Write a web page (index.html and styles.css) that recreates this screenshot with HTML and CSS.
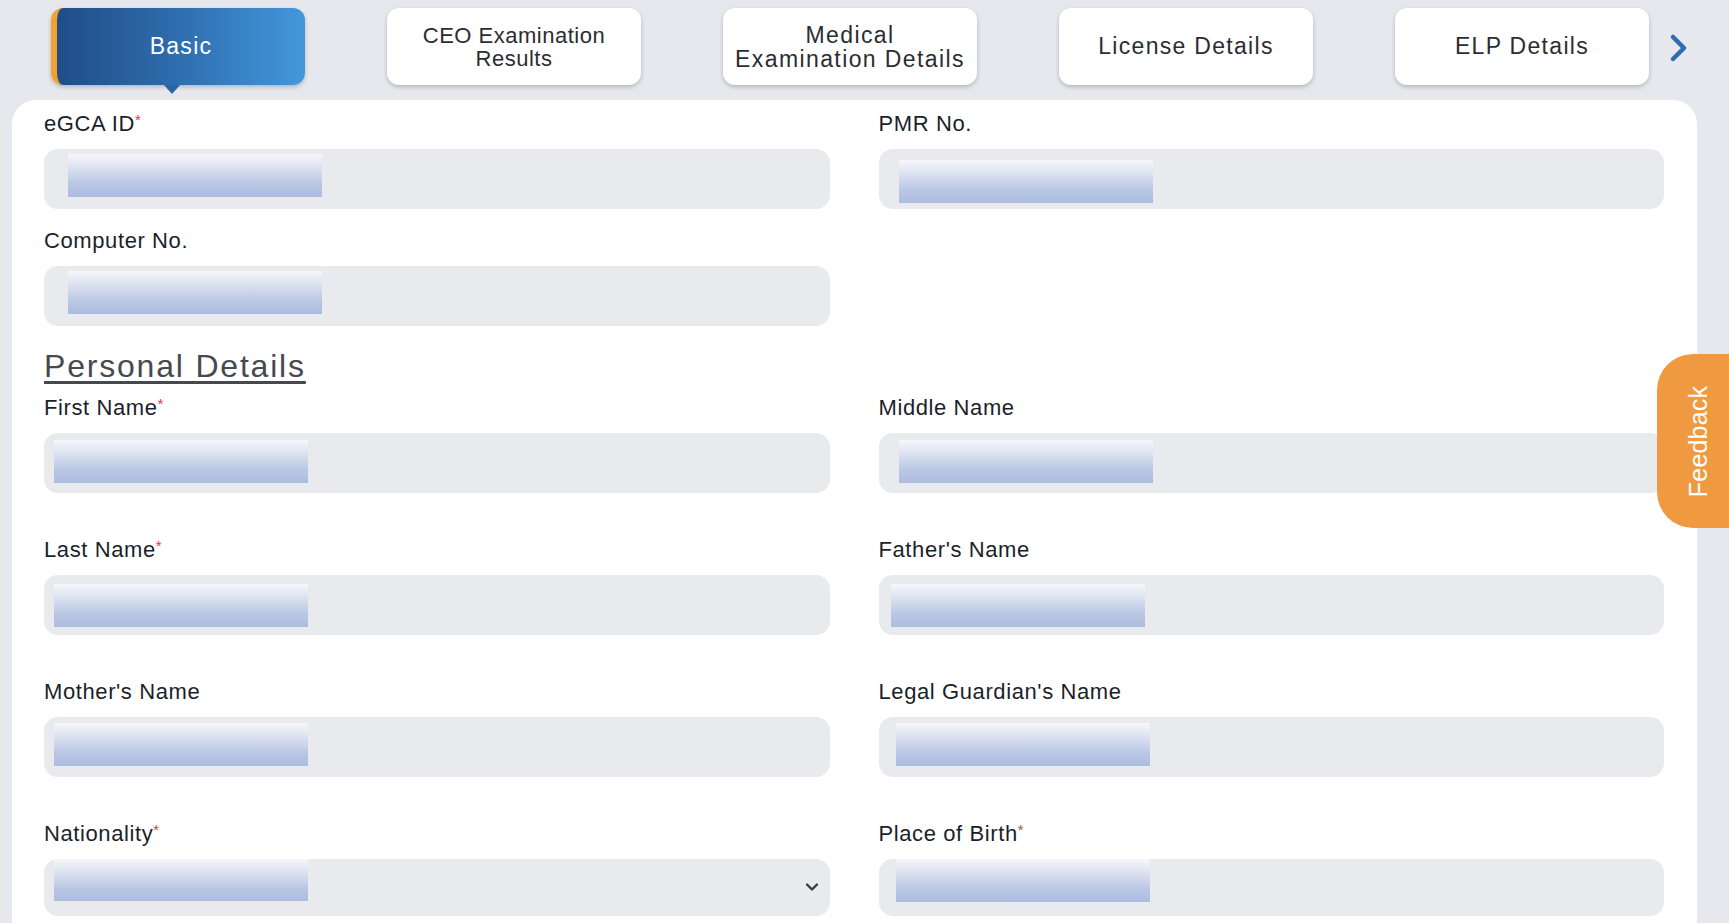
FILE: index.html
```html
<!DOCTYPE html>
<html lang="en">
<head>
<meta charset="utf-8">
<title>Basic Details</title>
<link rel="stylesheet" href="styles.css">
</head>
<body>
<div class="page">
  <nav class="tabs">
    <div class="tab-list">
      <div class="tab active">Basic</div>
      <div class="tab tab-ceo">CEO Examination<br>Results</div>
      <div class="tab tab-med">Medical<br>Examination Details</div>
      <div class="tab">License Details</div>
      <div class="tab">ELP Details</div>
    </div>
    <svg class="next" width="20" height="30" viewBox="0 0 20 30" aria-hidden="true">
      <polyline points="4,4 15,15 4,26" fill="none" stroke="#2f6db3" stroke-width="4.5" stroke-linecap="round" stroke-linejoin="round"/>
    </svg>
  </nav>

  <section class="card">
    <div class="grid grid-top">
      <div class="field">
        <label class="label">eGCA ID<span class="req">*</span></label>
        <div class="input"><span class="redact r-a"></span></div>
      </div>
      <div class="field">
        <label class="label">PMR No.</label>
        <div class="input"><span class="redact r-b"></span></div>
      </div>
      <div class="field">
        <label class="label">Computer No.</label>
        <div class="input"><span class="redact r-a"></span></div>
      </div>
    </div>

    <h2 class="section-title">Personal Details</h2>

    <div class="grid grid-personal">
      <div class="field">
        <label class="label">First Name<span class="req">*</span></label>
        <div class="input"><span class="redact r-c"></span></div>
      </div>
      <div class="field">
        <label class="label">Middle Name</label>
        <div class="input"><span class="redact r-d"></span></div>
      </div>
      <div class="field">
        <label class="label">Last Name<span class="req">*</span></label>
        <div class="input"><span class="redact r-e"></span></div>
      </div>
      <div class="field">
        <label class="label">Father's Name</label>
        <div class="input"><span class="redact r-f"></span></div>
      </div>
      <div class="field">
        <label class="label">Mother's Name</label>
        <div class="input"><span class="redact r-g"></span></div>
      </div>
      <div class="field">
        <label class="label">Legal Guardian's Name</label>
        <div class="input"><span class="redact r-h"></span></div>
      </div>
      <div class="field">
        <label class="label">Nationality<span class="req">*</span></label>
        <div class="input input-select">
          <span class="redact r-i"></span>
          <svg class="caret" width="14" height="10" viewBox="0 0 14 10" aria-hidden="true">
            <polyline points="2,2.5 7,7.5 12,2.5" fill="none" stroke="#3a3d44" stroke-width="2.4" stroke-linecap="round" stroke-linejoin="round"/>
          </svg>
        </div>
      </div>
      <div class="field">
        <label class="label">Place of Birth<span class="req">*</span></label>
        <div class="input input-select"><span class="redact r-j"></span></div>
      </div>
    </div>
  </section>

  <div class="feedback"><span>Feedback</span></div>
</div>
</body>
</html>
```

FILE: styles.css
```css
* { box-sizing: border-box; }

html, body {
  margin: 0;
  height: 100%;
  overflow: hidden;
}

body {
  background: #e6e8ed;
  font-family: "Liberation Sans", Arial, sans-serif;
  color: #1c1f2a;
}

.page {
  padding: 8px 32px 0 12px;
}

/* ---------- Tabs ---------- */
.tabs {
  display: flex;
  align-items: center;
  padding-left: 39px;
}

.tab-list {
  display: flex;
  gap: 82px;
}

.tab {
  position: relative;
  width: 254px;
  height: 77px;
  display: flex;
  align-items: center;
  justify-content: center;
  text-align: center;
  background: #ffffff;
  border-radius: 12px;
  box-shadow: 0 2px 4px rgba(0, 0, 0, 0.22);
  font-size: 23px;
  letter-spacing: 1.3px;
  line-height: 23px;
  color: #2b2d33;
}

.tab-ceo {
  font-size: 22px;
  letter-spacing: 0.5px;
}

.tab-med {
  line-height: 24px;
  letter-spacing: 1.4px;
}

.tab.active {
  color: #ffffff;
  background: linear-gradient(90deg, #204d87 0%, #2f6eaf 50%, #4298dc 100%);
  border-left: 6px solid #f0a232;
}

.tab.active::after {
  content: "";
  position: absolute;
  left: 107px;
  bottom: -9px;
  width: 0;
  height: 0;
  border-left: 8px solid transparent;
  border-right: 8px solid transparent;
  border-top: 9px solid #2a64a1;
}

.next {
  margin-left: 20px;
  margin-top: 2px;
}

/* ---------- Card ---------- */
.card {
  margin-top: 15px;
  width: 1685px;
  min-height: 900px;
  background: #ffffff;
  border-radius: 24px 24px 0 0;
  padding: 12px 33px 0 32px;
}

.grid {
  display: grid;
  grid-template-columns: 1fr 1fr;
  column-gap: 49px;
}

.grid-top { row-gap: 20px; }
.grid-personal { row-gap: 45px; }

.field {
  display: flex;
  flex-direction: column;
}

.label {
  font-size: 22px;
  line-height: 24px;
  letter-spacing: 0.6px;
  color: #1c1f2a;
  margin-bottom: 13px;
}

.req {
  color: #e5363d;
  font-size: 15px;
  line-height: 0;
  vertical-align: 6px;
  letter-spacing: 0;
}

.input {
  position: relative;
  height: 60px;
  background: #e8eaed;
  border-radius: 14px;
}

.input-select { height: 57px; }

.redact {
  position: absolute;
  width: 254px;
  height: 43px;
  background: linear-gradient(180deg, #f6f7fa 0%, #d6ddee 38%, #b9c7e5 70%, #acbce0 100%);
}

.r-a { left: 24px; top: 5px; }
.r-b { left: 20px; top: 11px; }
.r-c { left: 10px; top: 7px; }
.r-d { left: 20px; top: 7px; }
.r-e { left: 10px; top: 9px; }
.r-f { left: 12px; top: 9px; }
.r-g { left: 10px; top: 6px; }
.r-h { left: 17px; top: 6px; }
.r-i { left: 10px; top: 0; height: 42px; }
.r-j { left: 17px; top: 0; }

.caret {
  position: absolute;
  right: 11px;
  top: 23px;
}

.section-title {
  margin: 23px 0 13px;
  font-size: 32px;
  line-height: 34px;
  font-weight: normal;
  letter-spacing: 1.8px;
  color: #464950;
  text-decoration: underline;
  text-decoration-thickness: 3px;
  text-underline-offset: 4px;
  display: inline-block;
}

/* ---------- Feedback ---------- */
.feedback {
  position: fixed;
  right: 0;
  top: 354px;
  width: 72px;
  height: 174px;
  padding-left: 12px;
  background: #ef9a40;
  border-radius: 36px 0 0 36px;
  display: flex;
  align-items: center;
  justify-content: center;
}

.feedback span {
  display: block;
  transform: rotate(-90deg);
  color: #ffffff;
  font-size: 25px;
  letter-spacing: 0.2px;
  white-space: nowrap;
}
```
